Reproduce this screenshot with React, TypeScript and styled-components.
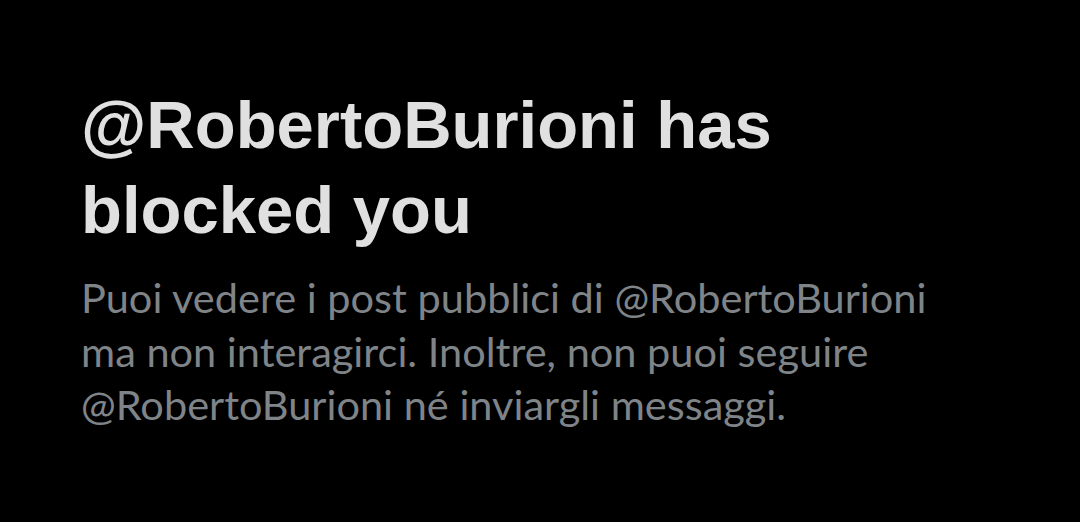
import React from "react";
import styled, { createGlobalStyle } from "styled-components";

const Global = createGlobalStyle`
  html, body { margin: 0; padding: 0; background: #000; }
  body { width: 1080px; height: 522px; overflow: hidden; }
`;

const Page = styled.main`
  width: 1080px;
  height: 522px;
  background: #000;
  box-sizing: border-box;
  padding: 82px 0 0 81px;
  display: flex;
  flex-direction: column;
`;

const Title = styled.h1`
  margin: 0;
  font-family: "Liberation Sans", Arial, sans-serif;
  font-weight: 700;
  font-size: 67px;
  line-height: 85px;
  color: #e0e0e0;
  letter-spacing: 0;
`;

const Body = styled.p`
  margin: 19px 0 0 0;
  font-family: Lato, "Noto Sans", sans-serif;
  font-weight: 400;
  font-size: 41.5px;
  line-height: 53.5px;
  color: #7f8489;
`;

export default function App() {
  return (
    <>
      <Global />
      <Page>
        <Title>
          @RobertoBurioni has
          <br />
          blocked you
        </Title>
        <Body>
          Puoi vedere i post pubblici di @RobertoBurioni
          <br />
          ma non interagirci. Inoltre, non puoi seguire
          <br />
          @RobertoBurioni né inviargli messaggi.
        </Body>
      </Page>
    </>
  );
}
